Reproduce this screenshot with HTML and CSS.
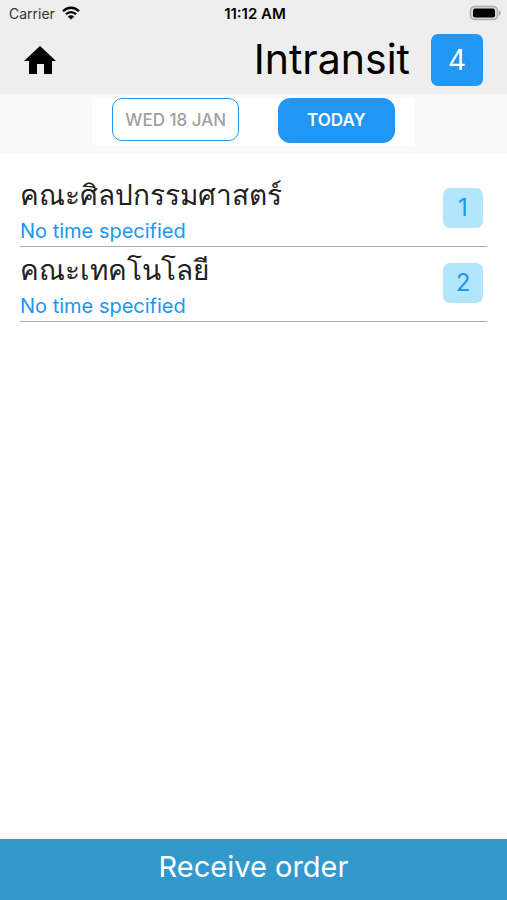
FILE: index.html
```html
<!DOCTYPE html>
<html lang="en">
<head>
<meta charset="utf-8">
<meta name="viewport" content="width=device-width, initial-scale=1">
<title>Intransit</title>
<link rel="stylesheet" href="styles.css">
</head>
<body>
<header class="header">
  <div class="status">
    <div class="carrier">
      <span>Carrier</span>
      <svg class="wifi" viewBox="0 0 18 14" aria-hidden="true">
        <path d="M1 5.2C5.5.6 12.500.6 17 5.200M3.900 8.200c2.900-2.900 7.300-2.900 10.200 0" fill="none" stroke="#000" stroke-width="2.300"/>
        <path d="M9 13.500 5.800 10.400c1.800-1.700 4.600-1.700 6.400 0z"/>
      </svg>
    </div>
    <time class="clock">11:12 AM</time>
    <svg class="battery" viewBox="0 0 32 16" aria-hidden="true">
      <rect x="1.500" y="1.500" width="27" height="13" rx="4" fill="#ddd" stroke="#aaa" stroke-width="1.500"/>
      <rect x="4" y="3.500" width="22" height="9" rx="2"/>
      <path d="M30 5.500c2 .6 2 4.400 0 5z" fill="#999"/>
    </svg>
  </div>
  <div class="bar">
    <a class="home" href="#" aria-label="Home">
      <svg viewBox="0 0 32 28" aria-hidden="true"><path d="M16 0 32 15h-4v13h-8V18h-7v10H5V15H0z"/></svg>
    </a>
    <h1 class="title">Intransit</h1>
    <span class="total">4</span>
  </div>
</header>
<nav class="days" aria-label="Day">
  <div class="days-inner">
    <button class="day" type="button">WED 18 JAN</button>
    <button class="day day-active" type="button">TODAY</button>
  </div>
</nav>
<main class="list">
  <article class="stop">
    <div>
      <h2 class="name" lang="th">คณะศิลปกรรมศาสตร์</h2>
      <p class="time">No time specified</p>
    </div>
    <span class="count">1</span>
  </article>
  <article class="stop">
    <div>
      <h2 class="name" lang="th">คณะเทคโนโลยี</h2>
      <p class="time">No time specified</p>
    </div>
    <span class="count">2</span>
  </article>
</main>
<button class="receive" type="button">Receive order</button>
</body>
</html>
```
FILE: styles.css
```css
* {
  box-sizing: border-box;
}

body {
  margin: 0;
  min-height: 100vh;
  display: flex;
  flex-direction: column;
  background: #fff;
  color: #000;
  font-family: Inter, "Noto Sans", sans-serif;
}

h1,
h2,
p {
  margin: 0;
  font-weight: 400;
}

button {
  font-family: inherit;
  cursor: pointer;
}

svg {
  display: block;
}

.header {
  background: #eee;
  padding-bottom: 8px;
}

.status {
  display: grid;
  grid-template-columns: 1fr auto 1fr;
  align-items: center;
  height: 26px;
  padding: 0 6px 0 9px;
}

.carrier {
  display: flex;
  align-items: center;
  gap: 7px;
  font-size: 14px;
  color: #333;
}

.wifi {
  width: 18px;
  height: 14px;
}

.clock {
  font-size: 15px;
  font-weight: 600;
}

.battery {
  width: 32px;
  height: 16px;
  justify-self: end;
}

.bar {
  display: flex;
  align-items: center;
  padding: 8px 24px 0;
}

.home svg {
  width: 32px;
  height: 28px;
}

.title {
  margin-left: auto;
  margin-right: 21px;
  padding-bottom: 2px;
  font-size: 41px;
  line-height: 48px;
}

.total {
  width: 52px;
  border-radius: 7px;
  background: #2196f3;
  color: #fff;
  font-size: 28px;
  line-height: 52px;
  text-align: center;
}

.days {
  display: flex;
  justify-content: center;
  padding: 4px 0 8px;
  background: #fafafa;
}

.days-inner {
  display: flex;
  align-items: flex-start;
  gap: 39px;
  padding: 0 20px 2px;
  background: #fff;
}

.day {
  height: 43px;
  padding: 0 12px;
  border: 1px solid #2196f3;
  border-radius: 10px;
  background: #fff;
  color: #a0a0a0;
  font-size: 17px;
  font-weight: 500;
}

.day-active {
  height: 45px;
  padding: 0 28px 2px;
  border-radius: 12px;
  background: #2196f3;
  color: #fff;
  font-weight: 600;
}

.list {
  flex: 1;
  padding: 19px 20px 0;
}

.stop {
  display: flex;
  align-items: center;
  justify-content: space-between;
  height: 75px;
  padding: 0 4px 3px 0;
  border-bottom: 1px solid #aaa;
}

.name {
  color: #212121;
  font-size: 28px;
  line-height: 46px;
}

.time {
  color: #2196f3;
  font-size: 20px;
  line-height: 26px;
}

.count {
  width: 40px;
  border-radius: 7px;
  background: #b3e5fc;
  color: #2196f3;
  font-size: 24px;
  line-height: 40px;
  text-align: center;
}

.receive {
  height: 61px;
  padding: 0 0 6px;
  border: 0;
  background: #3399cc;
  color: #fff;
  font-size: 29px;
}
```
